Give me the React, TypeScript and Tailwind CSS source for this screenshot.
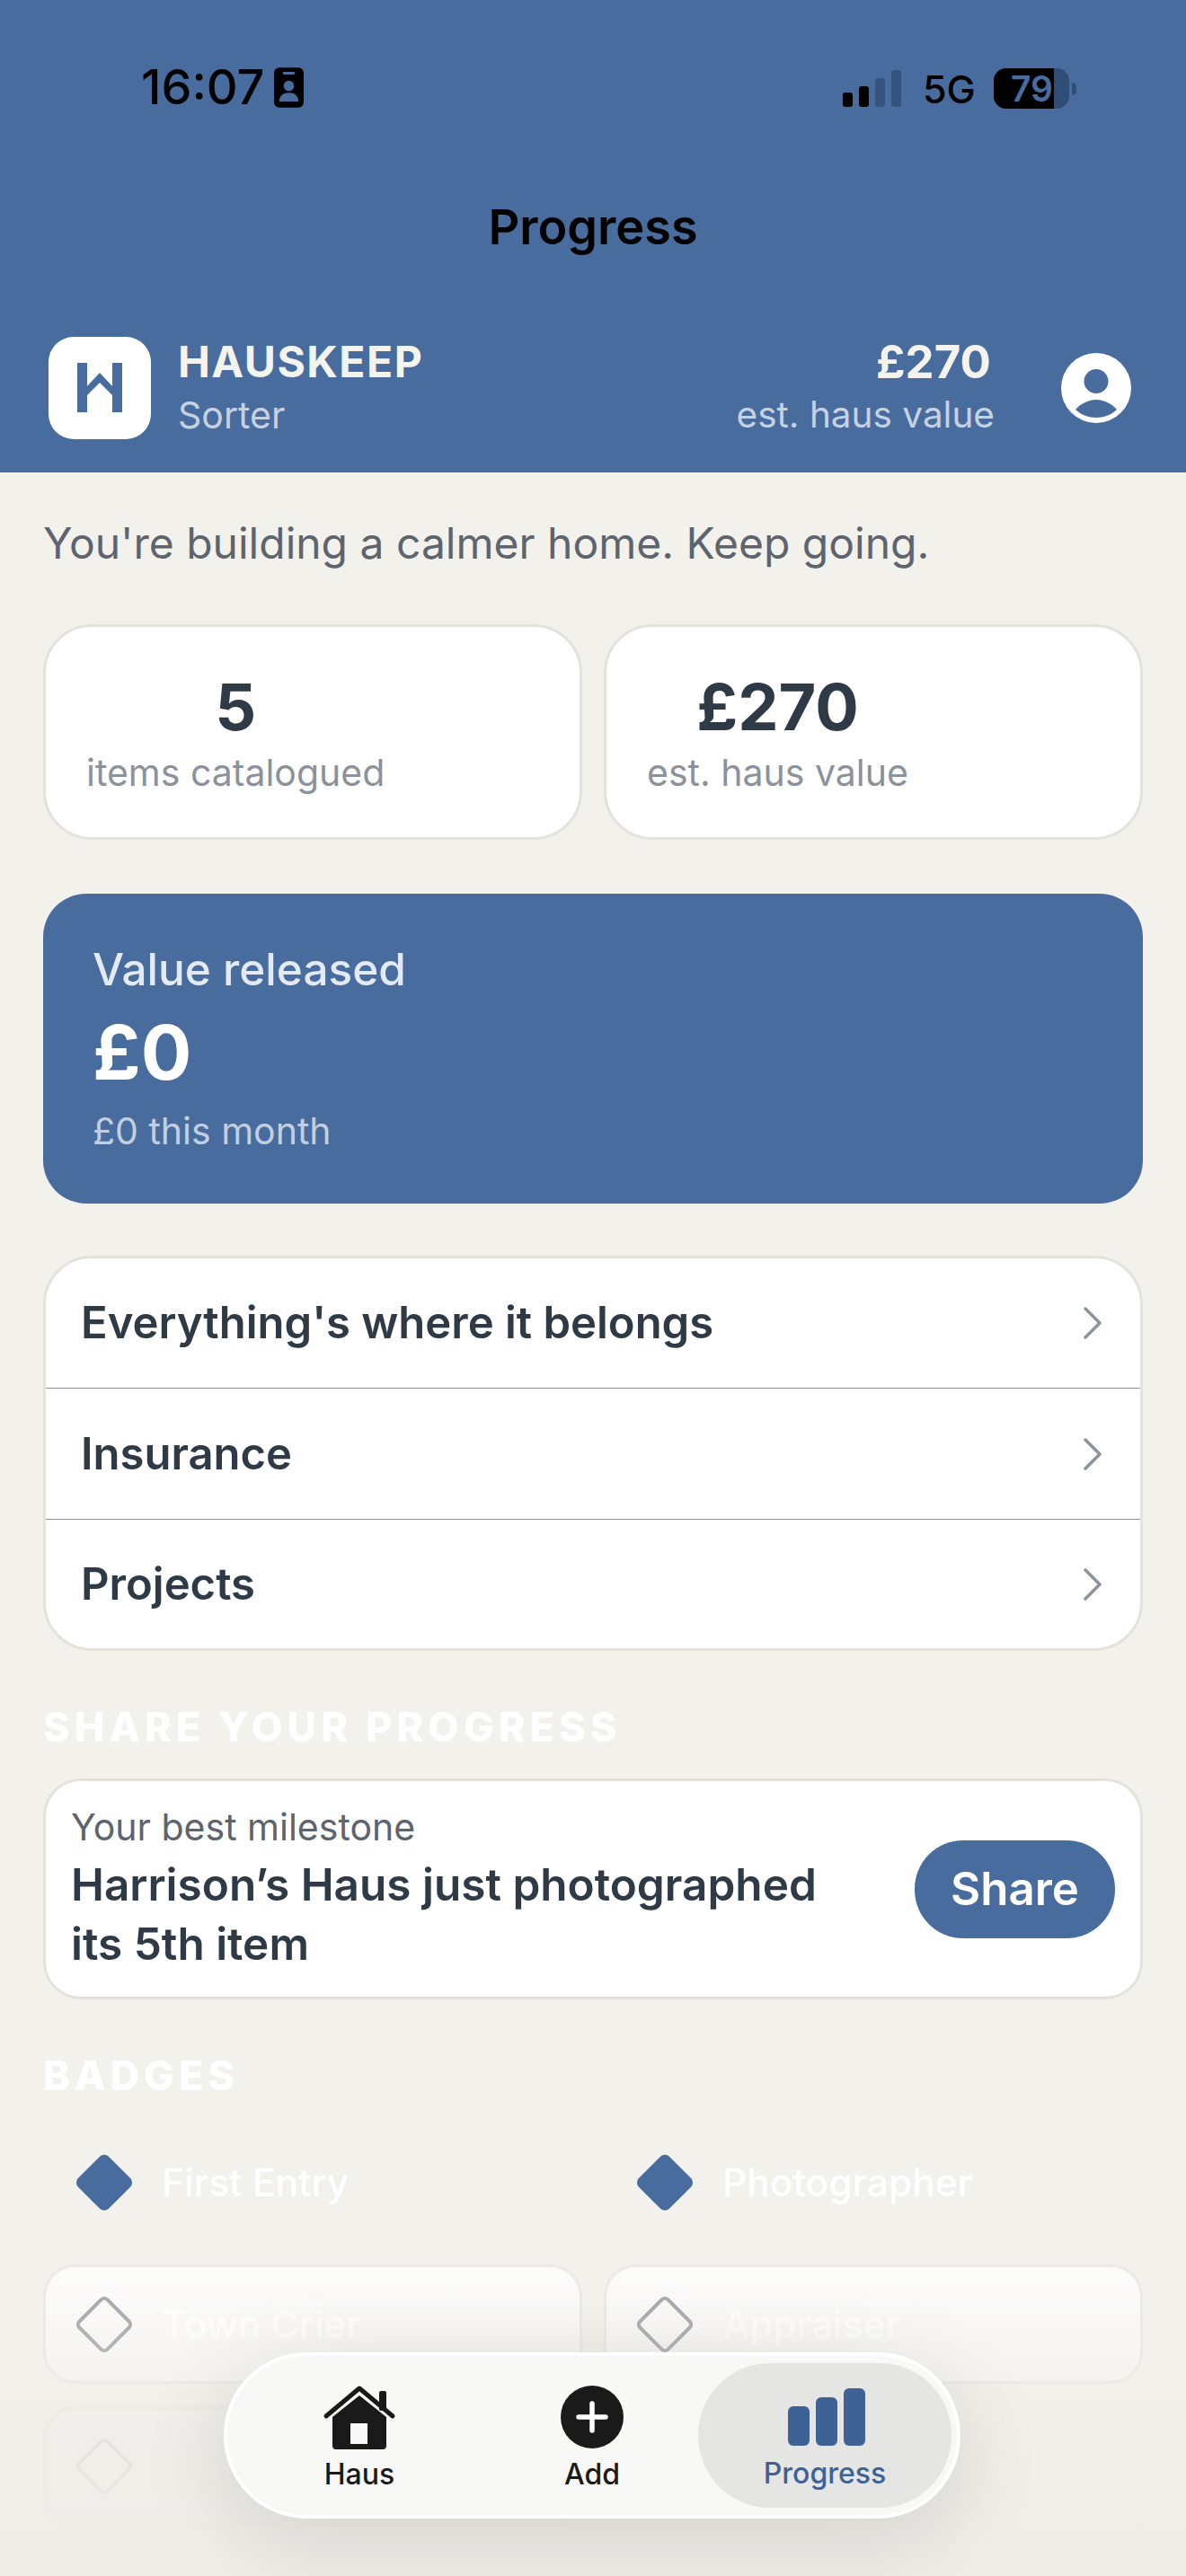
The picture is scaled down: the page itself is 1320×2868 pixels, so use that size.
import React from "react";

const Chevron = () => (
  <svg width="20" height="36" viewBox="0 0 20 36" fill="none" stroke="#8c939c" strokeWidth="3.5" strokeLinecap="round" strokeLinejoin="round">
    <path d="M2 2l16 16L2 34" />
  </svg>
);

const Diamond = ({ filled, faded }: { filled?: boolean; faded?: boolean }) => (
  <div className="flex h-[64px] w-[64px] shrink-0 items-center justify-center">
    <div
      className={
        filled
          ? "h-[48px] w-[48px] rotate-45 rounded-[7px] bg-[#486c9e]"
          : faded
            ? "h-[48px] w-[48px] rotate-45 rounded-[7px] border-[4px] border-[#dadad7]"
            : "h-[48px] w-[48px] rotate-45 rounded-[7px] border-[4px] border-[#a9abae]"
      }
    />
  </div>
);

const Row = ({ label, cls }: { label: string; cls: string }) => (
  <div className={"flex items-center justify-between pl-[39px] pr-[43px] " + cls}>
    <span className="text-[49px] font-semibold text-[#2f3a47]">{label}</span>
    <Chevron />
  </div>
);

export default function App() {
  return (
    <div
      className="relative h-[2868px] w-[1320px] overflow-hidden bg-[#f2f1ec]"
      style={{ fontFamily: "Inter, 'Liberation Sans', sans-serif" }}
    >
      <header className="h-[526px] bg-[#486c9e]">
        <div className="flex h-[121px] items-end justify-between pl-[157px] pr-[122px]">
          <div className="flex items-center gap-[11px]">
            <span className="text-[54px] font-medium leading-[48px] text-black">16:07</span>
            <svg width="33" height="45" viewBox="0 0 34 46">
              <rect width="34" height="46" rx="6" fill="#000" />
              <rect x="10" y="5" width="14" height="3" rx="1.5" fill="#486c9e" />
              <circle cx="17" cy="21" r="6" fill="#486c9e" />
              <path d="M6 39c0-7 5-10 11-10s11 3 11 10z" fill="#486c9e" />
            </svg>
          </div>
          <div className="flex items-center">
            <div className="flex items-end gap-[7px]">
              <div className="h-[16px] w-[11px] rounded-[3px] bg-black" />
              <div className="h-[23px] w-[11px] rounded-[3px] bg-black" />
              <div className="h-[32px] w-[11px] rounded-[3px] bg-[#34537f]" />
              <div className="h-[41px] w-[11px] rounded-[3px] bg-[#34537f]" />
            </div>
            <span className="ml-[24px] w-[56px] whitespace-nowrap text-[43px] font-medium leading-[44px] text-black">5G</span>
            <div className="relative ml-[23px] flex h-[45px] w-[84px] overflow-hidden rounded-[14px] bg-[#304d78]">
              <div className="flex h-full w-[67px] items-center justify-end bg-black pr-[1px]">
                <span className="text-[39px] font-semibold leading-[45px] text-[#486c9e]">79</span>
              </div>
            </div>
            <div className="ml-[3px] h-[14px] w-[5px] rounded-r-full bg-[#304d78]" />
          </div>
        </div>

        <h1 className="mt-[101px] text-center text-[54px] font-semibold leading-[62px] text-black">Progress</h1>

        <div className="mt-[90px] flex items-center justify-between pl-[54px] pr-[61px]">
          <div className="flex items-center gap-[30px]">
            <div className="flex h-[114px] w-[114px] items-center justify-center rounded-[28px] bg-white">
              <svg width="50" height="55" viewBox="0 0 50 55">
                <rect x="0" y="0" width="11" height="55" fill="#486c9e" />
                <rect x="39" y="0" width="11" height="55" fill="#486c9e" />
                <path d="M11 26L25 11l14 15v10L25 22 11 36z" fill="#486c9e" />
              </svg>
            </div>
            <div className="flex flex-col">
              <span className="text-[48px] font-bold leading-[58px] tracking-[1.5px] text-[#f5f3ee]">HAUSKEEP</span>
              <span className="mt-[3px] text-[41px] leading-[54px] text-[#c6d1e2]">Sorter</span>
            </div>
          </div>
          <div className="flex items-center gap-[74px]">
            <div className="flex flex-col items-end">
              <span className="pr-[4px] text-[51px] font-bold leading-[58px] text-[#f5f3ee]">£270</span>
              <span className="mt-[3px] text-[40.5px] leading-[54px] text-[#c6d1e2]">est. haus value</span>
            </div>
            <svg width="78" height="78" viewBox="0 0 78 78">
              <circle cx="39" cy="39" r="39" fill="#fff" />
              <circle cx="39" cy="31.5" r="13.5" fill="#486c9e" />
              <path d="M16 63c6-7 15-11 23-11s17 4 23 11c-6 6-15 9-23 9s-17-3-23-9z" fill="#486c9e" />
            </svg>
          </div>
        </div>
      </header>

      <main className="px-[48px]">
        <p className="mt-[51px] text-[48px] leading-[56px] text-[#5d646d]">You're building a calmer home. Keep going.</p>

        <div className="mt-[62px] grid grid-cols-2 gap-[24px]">
          <div className="flex h-[240px] flex-col items-start rounded-[54px] border-[3px] border-[#e4e2d9] bg-white pl-[45px]">
            <div className="mt-[47px] flex flex-col items-center">
              <span className="text-[72px] font-bold leading-[84px] text-[#2f3a47]">5</span>
              <span className="mt-[4px] text-[41px] leading-[54px] text-[#8b929b]">items catalogued</span>
            </div>
          </div>
          <div className="flex h-[240px] flex-col items-start rounded-[54px] border-[3px] border-[#e4e2d9] bg-white pl-[45px]">
            <div className="mt-[47px] flex flex-col items-center">
              <span className="text-[72px] font-bold leading-[84px] text-[#2f3a47]">£270</span>
              <span className="mt-[4px] text-[41px] leading-[54px] text-[#8b929b]">est. haus value</span>
            </div>
          </div>
        </div>

        <div className="mt-[60px] flex h-[345px] flex-col rounded-[48px] bg-[#486c9e] pl-[55px] pt-[53px]">
          <span className="text-[49.5px] font-medium leading-[62px] text-[#e4eaf3]">Value released</span>
          <span className="mt-[11px] text-[84px] font-bold leading-[102px] text-white">£0</span>
          <span className="mt-[9px] text-[41px] leading-[54px] text-[#c3cfe0]">£0 this month</span>
        </div>

        <div className="mt-[58px] overflow-hidden rounded-[54px] border-[3px] border-[#e4e2d9] bg-white">
          <Row label="Everything's where it belongs" cls="h-[145px] border-b border-[#8f8f8f]" />
          <Row label="Insurance" cls="h-[146px] border-b border-[#8f8f8f]" />
          <Row label="Projects" cls="h-[143px]" />
        </div>

        <h2 className="mt-[60px] text-[45px] font-extrabold leading-[50px] tracking-[5px] text-white">SHARE YOUR PROGRESS</h2>

        <div className="mt-[32px] flex h-[246px] items-center justify-between rounded-[42px] border-[3px] border-[#e4e2d9] bg-white pl-[28px] pr-[28px]">
          <div className="flex w-[880px] flex-col">
            <span className="text-[41px] leading-[48px] text-[#5d646d]">Your best milestone</span>
            <span className="mt-[7px] text-[49.5px] font-semibold leading-[66px] text-[#2f3a47]">Harrison’s Haus just photographed its 5th item</span>
          </div>
          <div className="flex h-[109px] w-[223px] items-center justify-center rounded-[54px] bg-[#486c9e] text-[51px] font-semibold text-white">Share</div>
        </div>

        <h2 className="mt-[60px] text-[45px] font-extrabold leading-[50px] tracking-[5px] text-white">BADGES</h2>

        <div className="mt-[27px] grid grid-cols-2 gap-x-[24px] gap-y-[25px]">
          <div className="flex h-[133px] items-center gap-[32px] pl-[36px]">
            <Diamond filled />
            <span className="text-[42.5px] font-medium text-white">First Entry</span>
          </div>
          <div className="flex h-[133px] items-center gap-[32px] pl-[36px]">
            <Diamond filled />
            <span className="text-[42.5px] font-medium text-white">Photographer</span>
          </div>
          <div className="flex h-[133px] items-center gap-[32px] rounded-[36px] border-[3px] border-[#ebeae5] bg-gradient-to-b from-[#fbfbf9] to-[#f7f6f3] pl-[33px]">
            <Diamond />
            <span className="text-[42.5px] font-medium text-[#fefefd]">Town Crier</span>
          </div>
          <div className="flex h-[133px] items-center gap-[32px] rounded-[36px] border-[3px] border-[#ebeae5] bg-gradient-to-b from-[#fbfbf9] to-[#f7f6f3] pl-[33px]">
            <Diamond />
            <span className="text-[42.5px] font-medium text-[#fefefd]">Appraiser</span>
          </div>
          <div className="flex h-[133px] items-center gap-[32px] rounded-[36px] border-[3px] border-[#ebeae5] bg-[#f2f0ec] pl-[33px]">
            <Diamond faded />
          </div>
        </div>
      </main>

      <div className="absolute inset-x-0 bottom-0 h-[300px] bg-gradient-to-b from-[#f2f1ec00] to-[#eeede8]" />

      <nav className="absolute left-[249px] top-[2619px] flex h-[185px] w-[820px] items-start rounded-[92px] border-[4px] border-white bg-[#f8f8f6] pl-[57px] pr-[6px] shadow-[0_20px_100px_rgba(0,0,0,0.12)]">
        <div className="mt-[32px] flex w-[180px] flex-col items-center">
          <svg width="82" height="72" viewBox="0 0 82 72">
            <path d="M4 35L41 4l37 31" fill="none" stroke="#1a1a1a" strokeWidth="5" strokeLinecap="round" strokeLinejoin="round" />
            <rect x="63" y="7" width="8" height="22" rx="2" fill="#1a1a1a" />
            <path fillRule="evenodd" d="M41 12l30 24v32a4 4 0 01-4 4H15a4 4 0 01-4-4V36zM31 43v23h19V43z" fill="#1a1a1a" />
          </svg>
          <span className="mt-[8px] text-[32px] font-medium leading-[40px] text-[#1a1a1a]">Haus</span>
        </div>
        <div className="ml-[119px] mt-[33px] flex w-[100px] flex-col items-center">
          <svg width="70" height="70" viewBox="0 0 70 70">
            <circle cx="35" cy="35" r="35" fill="#1a1a1a" />
            <path d="M35 20v30M20 35h30" stroke="#fff" strokeWidth="5.5" strokeLinecap="round" />
          </svg>
          <span className="mt-[9px] text-[32px] font-medium leading-[40px] text-[#1a1a1a]">Add</span>
        </div>
        <div className="ml-auto mt-[8px] flex h-[161px] w-[282px] flex-col items-center rounded-[80px] bg-[#e5e5e3] pt-[28px]">
          <div className="ml-[3px] flex h-[64px] items-end gap-[7px]">
            <div className="h-[44px] w-[24px] rounded-[6px] bg-[#3e6296]" />
            <div className="h-[54px] w-[24px] rounded-[6px] bg-[#3e6296]" />
            <div className="h-[64px] w-[24px] rounded-[6px] bg-[#3e6296]" />
          </div>
          <span className="mt-[11px] text-[32px] font-medium leading-[40px] text-[#3e6296]">Progress</span>
        </div>
      </nav>
    </div>
  );
}
